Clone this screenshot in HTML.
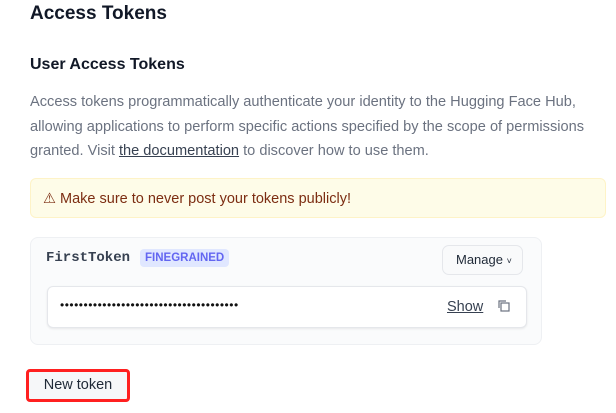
<!DOCTYPE html>
<html><head><style>
body{margin:0;width:616px;height:413px;background:#fff;font-family:"Liberation Sans",sans-serif;color:#111827;position:relative;overflow:hidden}
.a{position:absolute}
h1{position:absolute;left:30px;top:3px;margin:0;font-size:19px;font-weight:bold}
h2{position:absolute;left:30px;top:56px;margin:0;font-size:16px;font-weight:bold}
p{position:absolute;left:30px;top:90px;margin:0;width:590px;font-size:14.6px;line-height:24.5px;color:#6b7280}
p u{color:#374151}
.banner{left:30px;top:178px;width:576px;height:40px;background:#fefce8;border:1px solid #fef3c7;border-radius:6px;box-sizing:border-box;color:#7c2d12;font-size:14.5px;line-height:40px;padding-left:12px}
.card{left:30px;top:237px;width:512px;height:108px;background:#fafbfc;border:1px solid #eef0f3;border-radius:8px;box-sizing:border-box}
.name{left:46px;top:250px;font-family:"Liberation Mono",monospace;font-weight:bold;font-size:14px;color:#374151}
.tag{left:140px;top:249px;background:#e0e7ff;color:#6366f1;font-size:11.5px;font-weight:bold;padding:3px 5px;border-radius:4px}
.mg{left:442px;top:245px;width:81px;height:30px;border:1px solid #e5e7eb;border-radius:7px;background:#f9fafb;box-sizing:border-box;font-size:13px;line-height:28px;padding-left:13px;color:#1f2937}
.inp{left:47px;top:286px;width:480px;height:42px;border:1px solid #e5e7eb;border-radius:6px;background:#fff;box-sizing:border-box;box-shadow:0 1px 2px rgba(0,0,0,.08)}
.dots{left:60px;top:298px;font-size:12px;letter-spacing:0.5px;color:#111}
.show{left:447px;top:299px;font-size:14.5px;text-decoration:underline;color:#374151}
.nt{left:26px;top:369px;width:104px;height:33px;border:3px solid #ff2020;border-radius:4px;box-sizing:border-box;background:#f6f7f9;font-size:14.5px;line-height:27px;text-align:center;color:#1f2937}
</style></head><body>
<h1>Access Tokens</h1>
<h2>User Access Tokens</h2>
<p>Access tokens programmatically authenticate your identity to the Hugging Face Hub, allowing applications to perform specific actions specified by the scope of permissions granted. Visit <u>the documentation</u> to discover how to use them.</p>
<div class="a banner">⚠ Make sure to never post your tokens publicly!</div>
<div class="a card"></div>
<div class="a name">FirstToken</div>
<div class="a tag">FINEGRAINED</div>
<div class="a mg">Manage <span style="font-size:9px">˅</span></div>
<div class="a inp"></div>
<div class="a dots">••••••••••••••••••••••••••••••••••••••</div>
<div class="a show">Show</div>
<svg class="a" style="left:497px;top:299px" width="14" height="14" viewBox="0 0 14 14" fill="none" stroke="#6b7280" stroke-width="1.2"><rect x="4" y="4" width="8" height="8"/><path d="M2 9V2h7"/></svg>
<div class="a nt">New token</div>
</body></html>
